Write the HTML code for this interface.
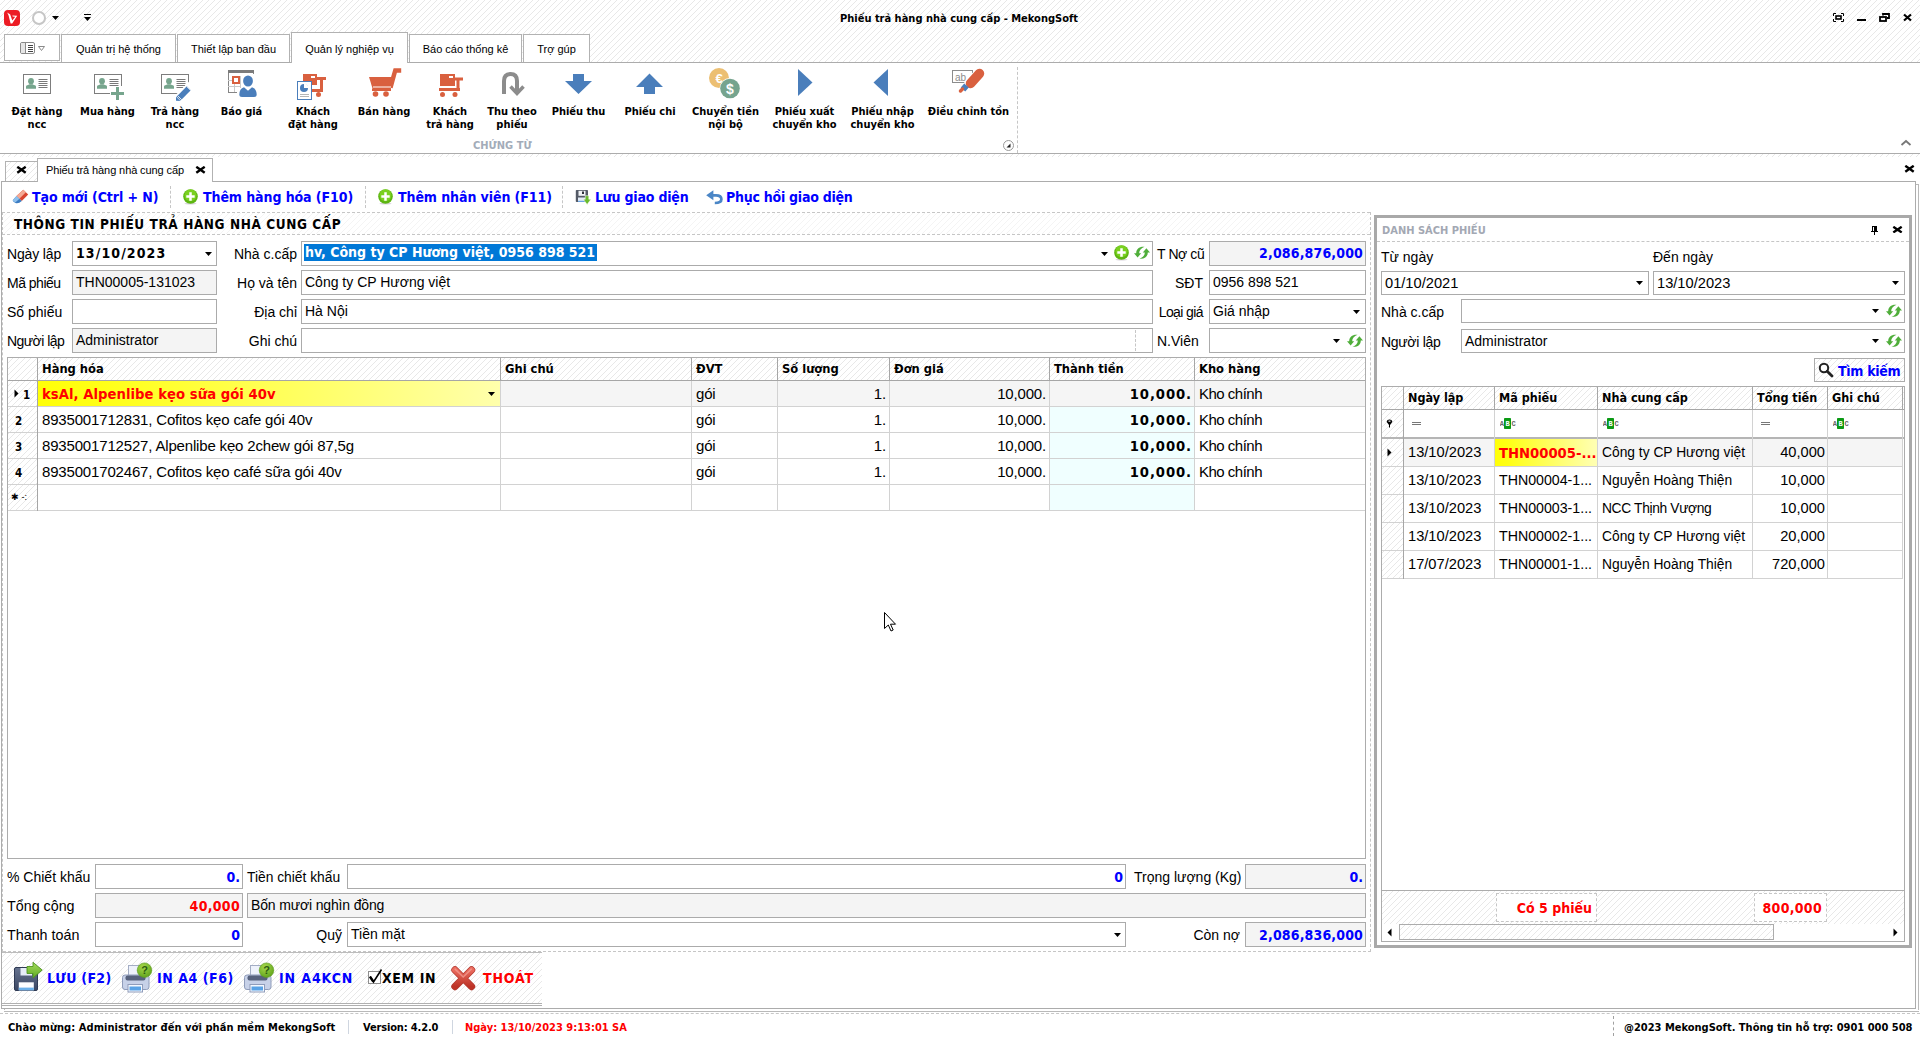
<!DOCTYPE html>
<html lang="vi">
<head>
<meta charset="utf-8">
<title>Phiếu trả hàng nhà cung cấp - MekongSoft</title>
<style>
*{box-sizing:border-box;margin:0;padding:0}
html,body{width:1920px;height:1038px;overflow:hidden;background:#fff}
body{position:relative;font-family:"Liberation Sans",sans-serif;font-size:14px;color:#000;cursor:default}
.a{position:absolute}
.hatch{background-color:#fff;background-image:repeating-linear-gradient(135deg,rgba(0,0,0,0) 0,rgba(0,0,0,0) 3.5355px,#e8e8e8 3.5355px,#e8e8e8 4.2426px)}
.b{font-family:"DejaVu Sans Condensed","DejaVu Sans","Liberation Sans",sans-serif;font-weight:bold}
.hl{position:absolute;height:1px;background:#acacac}
.vl{position:absolute;width:1px;background:#acacac}
.dh{position:absolute;height:0;border-top:1px dashed #c6c6c6}
.dv{position:absolute;width:0;border-left:1px dashed #c6c6c6}
.nw{white-space:nowrap}
/* ribbon tabs */
.rt{position:absolute;top:34px;height:29px;border:1px solid #b2b2b2;border-bottom:none;background:#fff;font-size:11px;line-height:29px;text-align:center;white-space:nowrap}
/* ribbon buttons */
  .rl{position:absolute;top:105px;width:100px;margin-left:-50px;text-align:center;font-size:11px;line-height:13px;white-space:nowrap}
/* form */
.lb{position:absolute;height:25px;line-height:27px;font-size:14px;white-space:nowrap}
.fd{position:absolute;height:25px;border:1px solid #ababab;background:#fff;font-size:14px;line-height:22px;padding:0 3px;white-space:nowrap;overflow:hidden}
.dis{background:#f4f4f4}
.r{text-align:right}
.fd.b.r{padding-right:2px;line-height:24px}
.blue{color:#0000ff}
.red{color:#ff0000}
.arr{position:absolute;width:7px;height:4px;background:#000;clip-path:polygon(0 0,100% 0,50% 100%)}
/* grid */
.gh{position:absolute;top:358px;height:22px;line-height:22px;font-size:12.800px;padding-left:4px;white-space:nowrap}
.gc{position:absolute;height:25px;line-height:26px;font-size:15px;letter-spacing:-.17px;white-space:nowrap;padding:0 4px;overflow:hidden}
.tb{position:absolute;top:186px;height:22px;line-height:22px;font-size:14px;letter-spacing:-.08px;color:#0000ff;white-space:nowrap}
.rc{position:absolute;height:27px;line-height:27px;font-size:14.67px;white-space:nowrap;padding:0 4px;overflow:hidden}
.rh{position:absolute;top:387px;height:22px;line-height:22px;font-size:12.5px;padding-left:4px;white-space:nowrap}
.hatch2{background-color:#fff;background-image:repeating-linear-gradient(135deg,rgba(0,0,0,0) 0,rgba(0,0,0,0) 3.5355px,#f4f4f4 3.5355px,#f4f4f4 4.2426px)}
</style>
</head>
<body>
<!-- TITLEBAR -->
<div class="a hatch" style="left:0;top:0;width:1920px;height:62px"></div>
<!-- app icon -->
<svg class="a" style="left:4px;top:10px" width="16" height="16" viewBox="0 0 16 16"><rect x="0" y="0" width="16" height="16" rx="4" fill="#ec1c24"/><path d="M3.2 2.6 L6.2 4.6 L8.3 10.6 L11.2 6.8 L8.6 6.6 L8.4 5.4 L13.2 5.8 L8.2 13.4 L6.6 13.4 L4.6 5.6 Z" fill="#fff"/></svg>
<div class="a" style="left:32px;top:11px;width:14px;height:14px;border:2px solid #c6c6c6;border-radius:50%;background:#fff"></div>
<div class="arr" style="left:52px;top:16px"></div>
<div class="a" style="left:84px;top:14px;width:7px;height:1px;background:#000"></div>
<div class="arr" style="left:84px;top:17px"></div>
<div class="a b nw" style="left:760px;top:11px;width:398px;height:15px;line-height:15px;font-size:11px;text-align:center">Phiếu trả hàng nhà cung cấp - MekongSoft</div>
<!-- window buttons -->
<svg class="a" style="left:1832px;top:12px" width="82" height="12" viewBox="0 0 82 12" fill="none" stroke="#000">
<path d="M1.5 4 V1.5 H4 M9 1.5 H11.5 V4 M11.5 7 V9.5 H9 M4 9.5 H1.5 V7" stroke-width="1"/><rect x="4" y="4" width="5" height="3" stroke-width="1.6"/>
<path d="M25 8 H34" stroke-width="2"/>
<path d="M51 3.5 V2 H57 V6 H55" stroke-width="1.8"/><rect x="48" y="5" width="6" height="4" stroke-width="1.8"/>
<path d="M72 2.5 L79 8.5 M79 2.5 L72 8.5" stroke-width="2.2"/>
</svg>

<div class="a" style="left:4px;top:34px;width:56px;height:27px;border:1px solid #b2b2b2;background:#fff"></div>
<svg class="a" style="left:19px;top:41px" width="28" height="15" viewBox="0 0 28 15" fill="none"><rect x="1.5" y="1.5" width="14" height="11" rx="1.5" stroke="#8a8a8a" fill="#fff"/><rect x="2" y="2" width="4" height="10" fill="#e6e6e6"/><path d="M6.5 1.5 V12.5" stroke="#8a8a8a"/><path d="M9 4.5 H14 M9 6.5 H14 M9 8.5 H14 M9 10.5 H14" stroke="#444" stroke-width="1"/><path d="M19.5 5.5 H25.5 L22.5 9.5 Z" stroke="#8a8a8a" fill="#fff"/></svg>
<div class="rt" style="left:61px;width:115px">Quản trị hệ thống</div>
<div class="rt" style="left:177px;width:113px">Thiết lập ban đầu</div>
<div class="rt" style="left:409px;width:113px">Báo cáo thống kê</div>
<div class="rt" style="left:523px;width:67px">Trợ gúp</div>
<div class="hl" style="left:0;top:62px;width:1920px"></div>
<div class="a" style="left:0;top:63px;width:1920px;height:90px;background:#fff"></div>
<div class="rt" style="left:291px;top:32px;width:117px;height:31px;line-height:33px">Quản lý nghiệp vụ</div>
<div class="hl" style="left:0;top:153px;width:1920px"></div>
<div class="a hatch" style="left:0;top:154px;width:1920px;height:3px"></div>

<!-- ribbon icons -->
<svg class="a" style="left:0;top:64px" width="1020" height="40" viewBox="0 64 1020 40">
<!-- 1 id card -->
<g><rect x="23.5" y="74.500" width="27" height="19" fill="#fff" stroke="#7d7d7d"/><ellipse cx="31.0" cy="81.200" rx="2.900" ry="3.100" fill="#76a58d"/><path d="M26.0 88.800 V86.600 Q26.0 85.300 28.0 85 L29.5 84.300 H32.5 L34.0 85 Q36.0 85.300 36.0 86.600 V88.800 Z" fill="#76a58d"/><path d="M38.5 79.5 H47.5 M38.5 81.5 H47.5 M38.5 83.5 H47.5 M38.5 85.5 H47.5 M38.5 87.5 H47.5" stroke="#787878" stroke-width="1"/></g>
<!-- 2 id card plus -->
<g><rect x="94.5" y="74.500" width="27" height="19" fill="#fff" stroke="#7d7d7d"/><ellipse cx="102.0" cy="81.200" rx="2.900" ry="3.100" fill="#76a58d"/><path d="M97.0 88.800 V86.600 Q97.0 85.300 99.0 85 L100.5 84.300 H103.5 L105.0 85 Q107.0 85.300 107.0 86.600 V88.800 Z" fill="#76a58d"/><path d="M109.5 79.5 H118.5 M109.5 81.5 H118.5 M109.5 83.5 H118.5 M109.5 85.5 H118.5" stroke="#787878" stroke-width="1"/><rect x="110" y="86" width="15" height="15" fill="#fff"/><path d="M117.500 87 V100 M111 93.500 H124" stroke="#76a58d" stroke-width="3"/></g>
<!-- 3 id card pencil -->
<g><rect x="161.5" y="74.500" width="27" height="19" fill="#fff" stroke="#7d7d7d"/><ellipse cx="169.0" cy="81.200" rx="2.900" ry="3.100" fill="#76a58d"/><path d="M164.0 88.800 V86.600 Q164.0 85.300 166.0 85 L167.5 84.300 H170.5 L172.0 85 Q174.0 85.300 174.0 86.600 V88.800 Z" fill="#76a58d"/><path d="M176.5 79.5 H185.5 M176.5 81.5 H185.5 M176.5 83.5 H185.5 M176.5 85.5 H185.5 M176.5 87.5 H183.5" stroke="#787878" stroke-width="1"/><path d="M174 103 L192 85" stroke="#fff" stroke-width="9"/><path d="M178.700 98.400 L188.800 88.300" stroke="#4a7ebb" stroke-width="5.600"/><path d="M176 100.800 V96.600 L180.400 101 Z" fill="#4a7ebb"/><path d="M187 86.800 L190.800 90.600" stroke="#fff" stroke-width=".8"/><path d="M178 96 L181.800 99.800" stroke="#fff" stroke-width=".8"/></g>
<!-- 4 calendar person -->
<g><rect x="228.500" y="71.500" width="25" height="21" fill="#fff" stroke="#858585"/><rect x="228" y="70" width="26" height="3" fill="#7b7b7b"/><path d="M234.500 76 V92 M240.500 76 V92 M228 80.500 H254 M228 86.500 H254" stroke="#c9c9c9"/><rect x="233" y="77" width="6" height="6" fill="#fff" stroke="#d9603f" stroke-width="2"/><path d="M241 74 H259 V98 H237 V88 H241 Z" fill="#fff"/><ellipse cx="248" cy="81" rx="4.900" ry="5.600" fill="#4a7ebb"/><path d="M239.300 95 Q239.300 88.500 244 87.300 L248 90.800 L252 87.300 Q256.700 88.500 256.700 95 Q256.700 97 254 97 H242 Q239.300 97 239.300 95 Z" fill="#4a7ebb"/></g>
<!-- 5 chart doc + cart -->
<g><rect x="303" y="74" width="14" height="11" fill="#d9603f"/><rect x="311" y="76" width="4" height="2" fill="#fff"/><path d="M316 78.500 H326 M321.500 78 V90 M305 90.500 H323" stroke="#d9603f" stroke-width="3"/><circle cx="318.500" cy="94.500" r="2.500" fill="#d9603f"/><rect x="297.500" y="81.500" width="14" height="18" fill="#fff" stroke="#4a7ebb"/><circle cx="304" cy="88" r="4" fill="#4a7ebb"/><path d="M304 88 V83.500 A4.500 4.500 0 0 1 308.500 88 Z" fill="#fff"/><path d="M300 94.500 H309 M300 96.500 H309" stroke="#b5b5b5"/></g>
<!-- 6 cart -->
<g fill="#d9603f"><path d="M369 77 H394 L390.500 90 H373 Z"/><path d="M392 78 L394.500 69.500 H400 V71.500 H396 L391.500 88" fill="none" stroke="#d9603f" stroke-width="2.400"/><path d="M373 87 H391" stroke="#fff" stroke-width="1"/><rect x="372" y="88.500" width="19" height="2.500"/><circle cx="375.500" cy="94" r="2.800"/><circle cx="386" cy="94" r="2.800"/></g>
<!-- 7 box cart -->
<g fill="#d9603f"><rect x="440" y="74" width="15" height="12"/><rect x="449" y="76" width="4" height="2" fill="#fff"/><path d="M454 79 H463 M458 78 V90 M439 89.500 H460" stroke="#d9603f" stroke-width="3" fill="none"/><circle cx="442.500" cy="94.500" r="2.500"/><circle cx="455" cy="94.500" r="2.500"/></g>
<!-- 8 u-turn -->
<g fill="none" stroke="#8c8c8c" stroke-width="4"><path d="M504 94 V81 Q504 74 510.500 74 Q517 74 517 81 V92"/><path d="M510.500 86.500 L517 93.500 L523.500 86.500" stroke-width="3.500"/></g>
<!-- 9 down arrow -->
<path d="M573 74 H584 V81 H592 L578.500 94 L565 81 H573 Z" fill="#4a7ebb"/>
<!-- 10 up arrow -->
<path d="M649.500 73.500 L663 87 H655 V94 H644 V87 H636 Z" fill="#4a7ebb"/>
<!-- 11 coins -->
<circle cx="719" cy="78" r="10" fill="#ecbf72"/><text x="719" y="83" font-family="Liberation Sans,sans-serif" font-weight="bold" font-size="13" fill="#fff" text-anchor="middle">€</text>
<circle cx="730" cy="88.500" r="10.500" fill="#fff"/><circle cx="730" cy="88.500" r="9.800" fill="#76a48e"/><text x="730" y="93.500" font-family="Liberation Sans,sans-serif" font-weight="bold" font-size="14" fill="#fff" text-anchor="middle">$</text>
<!-- 12 right tri -->
<path d="M798 69 L812.500 82.500 L798 96 Z" fill="#4a7ebb"/>
<!-- 13 left tri -->
<path d="M888 69 L873.500 82.500 L888 96 Z" fill="#4a7ebb"/>
<!-- 14 highlighter -->
<g><rect x="952.500" y="70.500" width="20" height="12" fill="#fff" stroke="#8c8c8c"/><text x="955" y="81" font-family="Liberation Sans,sans-serif" font-size="10" fill="#8c8c8c">ab</text><path d="M965 90 L977 76" stroke="#fff" stroke-width="11"/><path d="M970.500 83.500 L979.500 73.500" stroke="#d9603f" stroke-width="9.500" stroke-linecap="round"/><path d="M963 89.500 L966.500 85.500" stroke="#4a7ebb" stroke-width="6"/><path d="M960.500 91 L962.500 89" stroke="#d9603f" stroke-width="3.500" stroke-linecap="round"/></g>
</svg>
<!-- labels -->
<div class="rl b" style="left:37px">Đặt hàng<br>ncc</div>
<div class="rl b" style="left:107.500px">Mua hàng</div>
<div class="rl b" style="left:175px">Trả hàng<br>ncc</div>
<div class="rl b" style="left:241.500px">Báo giá</div>
<div class="rl b" style="left:313px">Khách<br>đặt hàng</div>
<div class="rl b" style="left:384px">Bán hàng</div>
<div class="rl b" style="left:450px">Khách<br>trả hàng</div>
<div class="rl b" style="left:512px">Thu theo<br>phiếu</div>
<div class="rl b" style="left:578.500px">Phiếu thu</div>
<div class="rl b" style="left:650px">Phiếu chi</div>
<div class="rl b" style="left:725.500px">Chuyển tiền<br>nội bộ</div>
<div class="rl b" style="left:804.500px">Phiếu xuất<br>chuyển kho</div>
<div class="rl b" style="left:882.500px">Phiếu nhập<br>chuyển kho</div>
<div class="rl b" style="left:968.500px">Điều chỉnh tồn</div>
<div class="a b nw" style="left:473px;top:139px;height:14px;line-height:14px;font-size:11px;color:#a3acb9">CHỨNG TỪ</div>
<div class="dv" style="left:1017px;top:67px;height:86px"></div>
<svg class="a" style="left:1002px;top:139px" width="13" height="13" viewBox="0 0 13 13"><circle cx="6.500" cy="6.500" r="5" fill="#fff" stroke="#9a9a9a"/><path d="M8.500 4.500 V8.500 H4.500 Z" fill="#222"/></svg>
<svg class="a" style="left:1900px;top:139px" width="12" height="8" viewBox="0 0 12 8"><path d="M1.500 6 L6 2 L10.500 6" fill="none" stroke="#777" stroke-width="1.800"/></svg>

<!-- document tabs -->
<div class="a hatch" style="left:5px;top:161px;width:33px;height:21px;border:1px solid #b2b2b2;border-bottom:none"></div>
<svg class="a" style="left:16px;top:166px" width="11" height="8" viewBox="0 0 11 8"><path d="M1.300 0.800 L9.700 6.800 M9.700 0.800 L1.300 6.800" stroke="#000" stroke-width="2.400"/></svg>
<!-- frames -->
<div class="a" style="left:4px;top:184px;width:1915px;height:828px;border:1px solid #b9b9b9;background:#fff"></div>
<div class="a" style="left:1px;top:181px;width:1915px;height:828px;border:1px solid #acacac;background:#fff"></div>
<div class="a" style="left:37px;top:158px;width:176px;height:24px;border:1px solid #b2b2b2;border-bottom:none;background:#fff"></div>
<div class="a nw" style="left:46px;top:161px;height:18px;line-height:18px;font-size:11px;letter-spacing:-.1px">Phiếu trả hàng nhà cung cấp</div>
<svg class="a" style="left:195px;top:166px" width="11" height="8" viewBox="0 0 11 8"><path d="M1.300 0.800 L9.700 6.800 M9.700 0.800 L1.300 6.800" stroke="#000" stroke-width="2.400"/></svg>
<svg class="a" style="left:1904px;top:165px" width="11" height="8" viewBox="0 0 11 8"><path d="M1.300 0.800 L9.700 6.800 M9.700 0.800 L1.300 6.800" stroke="#000" stroke-width="2.400"/></svg>

<!-- toolbar -->
<svg class="a" style="left:12px;top:189px" width="17" height="15" viewBox="0 0 17 15"><path d="M11.250 0.700 L16.200 5.500 L9.800 12 L4.500 7 Z" fill="#d8452f"/><path d="M4.500 7 L9.800 12 Q6.500 15 3.500 14 Q1 13 0.700 11.300 Z" fill="#3b7cc2"/><path d="M11.250 0.700 L13.900 3.300 L7.400 9.700 L4.500 7 Z" fill="#f4aa94"/><path d="M4.500 7 L7.400 9.700 L3.600 13.300 Q1.200 12.800 0.700 11.300 Z" fill="#8fc0ec"/></svg>
<div class="tb b" style="left:32px">Tạo mới (Ctrl + N)</div>
<div class="dv" style="left:170px;top:186px;height:22px"></div>
<svg class="a" style="left:183px;top:189px" width="15" height="16" viewBox="0 0 15 16"><ellipse cx="7.500" cy="14.600" rx="6" ry="1" fill="#d9d3de"/><circle cx="7.500" cy="7.500" r="7.300" fill="#5db512"/><circle cx="7.500" cy="6.300" r="6" fill="#84d926" opacity=".75"/><path d="M7.500 3.300 V11.700 M3.300 7.500 H11.700" stroke="#fff" stroke-width="2.500"/></svg>
<div class="tb b" style="left:203px">Thêm hàng hóa (F10)</div>
<div class="dv" style="left:365px;top:186px;height:22px"></div>
<svg class="a" style="left:378px;top:189px" width="15" height="16" viewBox="0 0 15 16"><ellipse cx="7.500" cy="14.600" rx="6" ry="1" fill="#d9d3de"/><circle cx="7.500" cy="7.500" r="7.300" fill="#5db512"/><circle cx="7.500" cy="6.300" r="6" fill="#84d926" opacity=".75"/><path d="M7.500 3.300 V11.700 M3.300 7.500 H11.700" stroke="#fff" stroke-width="2.500"/></svg>
<div class="tb b" style="left:398px">Thêm nhân viên (F11)</div>
<div class="dv" style="left:562px;top:186px;height:22px"></div>
<svg class="a" style="left:575px;top:190px" width="17" height="15" viewBox="0 0 17 15"><rect x="0.800" y="0" width="12.200" height="12" rx=".8" fill="#545a66"/><rect x="3.500" y="0.800" width="7" height="5" fill="#f1f3f7"/><rect x="7" y="1.500" width="2" height="2.500" fill="#2d3038"/><rect x="3" y="7.500" width="7.500" height="4.500" fill="#e3ebf6"/><rect x="3" y="10.800" width="7.500" height="1.200" fill="#6aa3e0"/><path d="M10.300 5.700 H13.800 V9.300 H16 L12.100 14.400 L8.300 9.300 H10.300 Z" fill="#69bb2c" stroke="#fff" stroke-width=".5"/></svg>
<div class="tb b" style="left:595px;letter-spacing:-.2px">Lưu giao diện</div>
<svg class="a" style="left:706px;top:190px" width="17" height="15" viewBox="0 0 17 15"><path d="M6 5.300 H10 C14.200 5.300 15.400 7.400 15.400 9.200 C15.400 12 13 13 8.800 13" fill="none" stroke="#4b86c6" stroke-width="2.700"/><path d="M0.200 5.300 L7.400 0.300 V10.300 Z" fill="#4b86c6"/></svg>
<div class="tb b" style="left:726px;letter-spacing:-.25px">Phục hồi giao diện</div>
<!-- section header -->
<div class="a hatch2" style="left:2px;top:213px;width:1368px;height:21px"></div>
<div class="dh" style="left:2px;top:212px;width:1368px"></div>
<div class="dh" style="left:2px;top:234px;width:1368px"></div>
<div class="dv" style="left:1370px;top:212px;height:740px"></div>
<div class="dv" style="left:2px;top:212px;height:740px"></div>
<div class="a b nw" style="left:14px;top:214px;height:20px;line-height:20px;font-size:13.500px;letter-spacing:.58px">THÔNG TIN PHIẾU TRẢ HÀNG NHÀ CUNG CẤP</div>

<!-- form left -->
<div class="lb" style="left:7px;top:241px;letter-spacing:-.15px">Ngày lập</div>
<div class="fd b" style="left:72px;top:241px;width:145px;font-size:14px;letter-spacing:1.100px">13/10/2023</div><div class="arr" style="left:205px;top:252px"></div>
<div class="lb" style="left:7px;top:270px;letter-spacing:-.5px">Mã phiếu</div>
<div class="fd dis" style="left:72px;top:270px;width:145px">THN00005-131023</div>
<div class="lb" style="left:7px;top:299px">Số phiếu</div>
<div class="fd" style="left:72px;top:299px;width:145px"></div>
<div class="lb" style="left:7px;top:328px;letter-spacing:-.55px">Người lập</div>
<div class="fd dis" style="left:72px;top:328px;width:145px">Administrator</div>
<!-- form middle -->
<div class="lb r" style="left:227px;width:70px;top:241px">Nhà c.cấp</div>
<div class="fd" style="left:301px;top:241px;width:852px"></div>
<div class="a" style="left:304px;top:244px;width:293px;height:17px;background:#0078d7"></div>
<div class="a b nw" style="left:305px;top:243px;height:19px;line-height:19px;font-size:14px;color:#fff">hv, Công ty CP Hương việt, 0956 898 521</div>
<div class="arr" style="left:1101px;top:252px"></div>
<svg class="a" style="left:1114px;top:245px" width="15" height="16" viewBox="0 0 15 16"><ellipse cx="7.500" cy="14.600" rx="6" ry="1" fill="#d9d3de"/><circle cx="7.500" cy="7.500" r="7.300" fill="#5db512"/><circle cx="7.500" cy="6.300" r="6" fill="#84d926" opacity=".75"/><path d="M7.500 3.300 V11.700 M3.300 7.500 H11.700" stroke="#fff" stroke-width="2.500"/></svg>
<svg class="a" style="left:1134px;top:246px" width="16" height="14" viewBox="0 0 16 14" fill="#4fae3a"><path d="M10.500 0.800 C5.500 0.300 2.200 3 2.200 7.200 H0 L3.600 11.400 L7.200 7.200 H5.200 C5.200 4.500 7 2.300 10.500 0.800 Z"/><path d="M5.500 12.800 C10.500 13.300 13.800 10.600 13.800 6.400 H16 L12.400 2.200 L8.800 6.400 H10.800 C10.800 9.100 9 11.300 5.500 12.800 Z"/></svg>
<div class="lb r" style="left:227px;width:70px;top:270px">Họ và tên</div>
<div class="fd" style="left:301px;top:270px;width:852px">Công ty CP Hương việt</div>
<div class="lb r" style="left:227px;width:70px;top:299px">Địa chỉ</div>
<div class="fd" style="left:301px;top:299px;width:852px">Hà Nội</div>
<div class="lb r" style="left:227px;width:70px;top:328px">Ghi chú</div>
<div class="fd" style="left:301px;top:328px;width:852px"></div>
<div class="dv" style="left:1135px;top:330px;height:21px"></div>
<!-- form right -->
<div class="lb" style="left:1157px;top:241px;letter-spacing:-.4px">T Nợ cũ</div>
<div class="fd dis b r blue" style="left:1209px;top:241px;width:157px;letter-spacing:.15px;line-height:22px">2,086,876,000</div>
<div class="lb r" style="left:1150px;width:53px;top:270px">SĐT</div>
<div class="fd" style="left:1209px;top:270px;width:157px">0956 898 521</div>
<div class="lb r" style="left:1150px;width:53px;top:299px;letter-spacing:-.6px">Loại giá</div>
<div class="fd" style="left:1209px;top:299px;width:157px">Giá nhập</div><div class="arr" style="left:1353px;top:310px"></div>
<div class="lb" style="left:1157px;top:328px">N.Viên</div>
<div class="fd" style="left:1209px;top:328px;width:157px"></div><div class="arr" style="left:1333px;top:339px"></div>
<svg class="a" style="left:1347px;top:333.5px" width="16" height="14" viewBox="0 0 16 14" fill="#4fae3a"><path d="M10.500 0.800 C5.500 0.300 2.200 3 2.200 7.200 H0 L3.600 11.400 L7.200 7.200 H5.200 C5.200 4.500 7 2.300 10.500 0.800 Z"/><path d="M5.500 12.800 C10.500 13.300 13.800 10.600 13.800 6.400 H16 L12.400 2.200 L8.800 6.400 H10.800 C10.800 9.100 9 11.300 5.500 12.800 Z"/></svg>

<!-- main grid -->
<div class="a" style="left:7px;top:357px;width:1359px;height:502px;border:1px solid #acacac;background:#fff"></div>
<div class="a hatch" style="left:8px;top:358px;width:1357px;height:22px"></div>
<div class="a hatch" style="left:8px;top:381px;width:29px;height:129px"></div>
<div class="a" style="left:500px;top:381px;width:865px;height:25px;background:#f5f5f5"></div>
<div class="a" style="left:1050px;top:407px;width:144px;height:103px;background:#f0ffff"></div>
<div class="a" style="left:38px;top:381px;width:462px;height:25px;background:linear-gradient(90deg,#ffff08 0,#ffff14 12%,#ffffac 100%)"></div>
<div class="hl" style="left:8px;top:380px;width:1357px;background:#a6a6a6"></div>
<div class="hl" style="left:8px;top:406px;width:1357px;background:#d2d2d2"></div>
<div class="hl" style="left:8px;top:432px;width:1357px;background:#d2d2d2"></div>
<div class="hl" style="left:8px;top:458px;width:1357px;background:#d2d2d2"></div>
<div class="hl" style="left:8px;top:484px;width:1357px;background:#d2d2d2"></div>
<div class="hl" style="left:8px;top:510px;width:1357px;background:#d2d2d2"></div>
<div class="vl" style="left:37px;top:358px;height:23px;background:#a6a6a6"></div>
<div class="vl" style="left:37px;top:381px;height:130px;background:#d2d2d2"></div>
<div class="vl" style="left:500px;top:358px;height:23px;background:#a6a6a6"></div>
<div class="vl" style="left:500px;top:381px;height:130px;background:#d2d2d2"></div>
<div class="vl" style="left:691px;top:358px;height:23px;background:#a6a6a6"></div>
<div class="vl" style="left:691px;top:381px;height:130px;background:#d2d2d2"></div>
<div class="vl" style="left:777px;top:358px;height:23px;background:#a6a6a6"></div>
<div class="vl" style="left:777px;top:381px;height:130px;background:#d2d2d2"></div>
<div class="vl" style="left:889px;top:358px;height:23px;background:#a6a6a6"></div>
<div class="vl" style="left:889px;top:381px;height:130px;background:#d2d2d2"></div>
<div class="vl" style="left:1049px;top:358px;height:23px;background:#a6a6a6"></div>
<div class="vl" style="left:1049px;top:381px;height:130px;background:#d2d2d2"></div>
<div class="vl" style="left:1194px;top:358px;height:23px;background:#a6a6a6"></div>
<div class="vl" style="left:1194px;top:381px;height:130px;background:#d2d2d2"></div>
<div class="vl" style="left:37px;top:381px;height:130px;background:#a6a6a6"></div>
<div class="gh b" style="left:38px">Hàng hóa</div>
<div class="gh b" style="left:501px">Ghi chú</div>
<div class="gh b" style="left:692px">ĐVT</div>
<div class="gh b" style="left:778px">Số lượng</div>
<div class="gh b" style="left:890px">Đơn giá</div>
<div class="gh b" style="left:1050px">Thành tiền</div>
<div class="gh b" style="left:1195px">Kho hàng</div>
<div class="gc b" style="left:8px;top:381px;width:29px;font-size:11.500px;line-height:28px;padding:0 0 0 15px">1</div>
<div class="gc b red" style="left:38px;top:381px;width:440px;font-size:14.670px;letter-spacing:.05px">ksAl, Alpenlibe kẹo sữa gói 40v</div>
<div class="gc" style="left:692px;top:381px;width:85px">gói</div>
<div class="gc r" style="padding-right:3px;left:778px;top:381px;width:111px">1.</div>
<div class="gc r" style="padding-right:3px;left:890px;top:381px;width:159px">10,000.</div>
<div class="gc r b" style="left:1050px;top:381px;width:144px;font-size:14.670px;letter-spacing:.9px;padding-right:2px">10,000.</div>
<div class="gc" style="left:1195px;top:381px;width:170px;letter-spacing:-.5px">Kho chính</div>
<div class="gc b" style="left:8px;top:407px;width:29px;font-size:11.500px;line-height:28px;text-align:left;padding:0 0 0 7px">2</div>
<div class="gc" style="left:38px;top:407px;width:462px">8935001712831, Cofitos kẹo cafe gói 40v</div>
<div class="gc" style="left:692px;top:407px;width:85px">gói</div>
<div class="gc r" style="padding-right:3px;left:778px;top:407px;width:111px">1.</div>
<div class="gc r" style="padding-right:3px;left:890px;top:407px;width:159px">10,000.</div>
<div class="gc r b" style="left:1050px;top:407px;width:144px;font-size:14.670px;letter-spacing:.9px;padding-right:2px">10,000.</div>
<div class="gc" style="left:1195px;top:407px;width:170px;letter-spacing:-.5px">Kho chính</div>
<div class="gc b" style="left:8px;top:433px;width:29px;font-size:11.500px;line-height:28px;text-align:left;padding:0 0 0 7px">3</div>
<div class="gc" style="left:38px;top:433px;width:462px">8935001712527, Alpenlibe kẹo 2chew gói 87,5g</div>
<div class="gc" style="left:692px;top:433px;width:85px">gói</div>
<div class="gc r" style="padding-right:3px;left:778px;top:433px;width:111px">1.</div>
<div class="gc r" style="padding-right:3px;left:890px;top:433px;width:159px">10,000.</div>
<div class="gc r b" style="left:1050px;top:433px;width:144px;font-size:14.670px;letter-spacing:.9px;padding-right:2px">10,000.</div>
<div class="gc" style="left:1195px;top:433px;width:170px;letter-spacing:-.5px">Kho chính</div>
<div class="gc b" style="left:8px;top:459px;width:29px;font-size:11.500px;line-height:28px;text-align:left;padding:0 0 0 7px">4</div>
<div class="gc" style="left:38px;top:459px;width:462px">8935001702467, Cofitos kẹo café sữa gói 40v</div>
<div class="gc" style="left:692px;top:459px;width:85px">gói</div>
<div class="gc r" style="padding-right:3px;left:778px;top:459px;width:111px">1.</div>
<div class="gc r" style="padding-right:3px;left:890px;top:459px;width:159px">10,000.</div>
<div class="gc r b" style="left:1050px;top:459px;width:144px;font-size:14.670px;letter-spacing:.9px;padding-right:2px">10,000.</div>
<div class="gc" style="left:1195px;top:459px;width:170px;letter-spacing:-.5px">Kho chính</div>
<svg class="a" style="left:14px;top:389px" width="5" height="9" viewBox="0 0 5 9"><path d="M0.500 0.500 L4.500 4.500 L0.500 8.500 Z" fill="#000"/></svg>
<div class="arr" style="left:488px;top:392px"></div>
<div class="a nw" style="left:11px;top:489px;height:17px;line-height:17px;font-size:9px">✱ -:</div>

<!-- bottom totals -->
<div class="lb" style="left:7px;top:864px;font-size:14px">% Chiết khấu</div>
<div class="fd b r blue" style="left:95px;top:864px;width:148px">0.</div>
<div class="lb" style="left:247px;top:864px;font-size:13.800px">Tiền chiết khấu</div>
<div class="fd b r blue" style="left:347px;top:864px;width:779px">0</div>
<div class="lb" style="left:1134px;top:864px;font-size:14px">Trọng lượng (Kg)</div>
<div class="fd dis b r blue" style="left:1245px;top:864px;width:121px">0.</div>
<div class="lb" style="left:7px;top:893px;font-size:14.300px">Tổng cộng</div>
<div class="fd dis b r red" style="left:95px;top:893px;width:148px;letter-spacing:.3px">40,000</div>
<div class="fd dis" style="left:247px;top:893px;width:1119px;letter-spacing:-.15px">Bốn mươi nghìn đồng</div>
<div class="lb" style="left:7px;top:922px;font-size:14.300px">Thanh toán</div>
<div class="fd b r blue" style="left:95px;top:922px;width:148px">0</div>
<div class="lb r" style="left:290px;width:52px;top:922px">Quỹ</div>
<div class="fd" style="left:347px;top:922px;width:779px">Tiền mặt</div><div class="arr" style="left:1114px;top:933px"></div>
<div class="lb r" style="left:1180px;width:60px;top:922px">Còn nợ</div>
<div class="fd dis b r blue" style="left:1245px;top:922px;width:121px;letter-spacing:.15px">2,086,836,000</div>
<div class="dh" style="left:3px;top:951px;width:1368px"></div>

<!-- button bar -->
<div class="a hatch" style="left:2px;top:952px;width:540px;height:51px"></div>
<div class="hl" style="left:2px;top:952px;width:540px;background:#bdbdbd"></div>
<div class="hl" style="left:2px;top:1003px;width:540px;background:#b0b0b0"></div>
<div class="hl" style="left:2px;top:1005px;width:540px;background:#b0b0b0"></div>
<!-- save icon -->
<svg class="a" style="left:13px;top:961px" width="31" height="32" viewBox="0 0 31 32"><defs><linearGradient id="gsv" x1="0" y1="0" x2="0" y2="1"><stop offset="0" stop-color="#66738f"/><stop offset="1" stop-color="#3b4763"/></linearGradient><linearGradient id="gar" x1="0" y1="0" x2="0" y2="1"><stop offset="0" stop-color="#a4dc5c"/><stop offset="1" stop-color="#5faa22"/></linearGradient></defs><rect x="1.500" y="6.500" width="23" height="23" rx="1.500" fill="url(#gsv)" stroke="#2f3a54"/><rect x="7.500" y="7" width="11.500" height="7.500" fill="#e6edf8"/><rect x="5.800" y="21.300" width="15" height="8" fill="#fdfdff"/><rect x="5.800" y="26.600" width="15" height="2.700" fill="#6cb0ea"/><path d="M14 5.500 H20 V1.300 L29.200 9 L20 17 V12.500 H14 Z" fill="url(#gar)" stroke="#4f9420" stroke-width=".9" stroke-linejoin="round"/></svg>
<div class="a b nw blue" style="left:47px;top:967px;height:22px;line-height:22px;font-size:14px;letter-spacing:.3px">LƯU (F2)</div>
<!-- printer 1 -->
<svg class="a" style="left:121px;top:962px" width="32" height="31" viewBox="0 0 32 31"><defs><radialGradient id="gq" cx=".4" cy=".3" r=".8"><stop offset="0" stop-color="#a6d94c"/><stop offset="1" stop-color="#5a9e17"/></radialGradient></defs><rect x="7.500" y="3.500" width="13" height="11.500" fill="#eef2fb" stroke="#a3adc4"/><rect x="1.500" y="13" width="26.500" height="14.500" rx="2.500" fill="#c7d1e8" stroke="#8f9cba"/><rect x="4.500" y="13.500" width="20" height="5" rx="2" fill="#57627d"/><rect x="7" y="22.500" width="14.500" height="7.500" fill="#f4f8ff" stroke="#8f9cba"/><rect x="8.500" y="24.500" width="11.500" height="4" fill="#5ba3e6"/><circle cx="23.500" cy="8.200" r="7.300" fill="url(#gq)" stroke="#5d9a1f" stroke-width=".6"/><text x="23.500" y="12.200" font-family="Liberation Sans,sans-serif" font-weight="bold" font-size="11" fill="#2a5a10" text-anchor="middle">?</text></svg>
<div class="a b nw blue" style="left:157px;top:967px;height:22px;line-height:22px;font-size:14px;letter-spacing:.55px">IN A4 (F6)</div>
<!-- printer 2 -->
<svg class="a" style="left:243px;top:962px" width="32" height="31" viewBox="0 0 32 31"><rect x="7.500" y="3.500" width="13" height="11.500" fill="#eef2fb" stroke="#a3adc4"/><rect x="1.500" y="13" width="26.500" height="14.500" rx="2.500" fill="#c7d1e8" stroke="#8f9cba"/><rect x="4.500" y="13.500" width="20" height="5" rx="2" fill="#57627d"/><rect x="7" y="22.500" width="14.500" height="7.500" fill="#f4f8ff" stroke="#8f9cba"/><rect x="8.500" y="24.500" width="11.500" height="4" fill="#5ba3e6"/><circle cx="23.500" cy="8.200" r="7.300" fill="url(#gq)" stroke="#5d9a1f" stroke-width=".6"/><text x="23.500" y="12.200" font-family="Liberation Sans,sans-serif" font-weight="bold" font-size="11" fill="#2a5a10" text-anchor="middle">?</text></svg>
<div class="a b nw blue" style="left:279px;top:967px;height:22px;line-height:22px;font-size:14px;letter-spacing:.9px">IN A4KCN</div>
<!-- checkbox -->
<div class="a" style="left:368px;top:971px;width:13px;height:13px;border:1px solid #8f8f8f;background:#fff"></div>
<svg class="a" style="left:368px;top:968px" width="16" height="16" viewBox="0 0 16 16"><path d="M2 8.500 L5.500 14 L13.500 1.500" fill="none" stroke="#000" stroke-width="1.600"/><path d="M2 8.800 L5.300 13.500" fill="none" stroke="#000" stroke-width="2.400"/></svg>
<div class="a b nw" style="left:382px;top:967px;height:22px;line-height:22px;font-size:14px;letter-spacing:.6px">XEM IN</div>
<!-- exit -->
<svg class="a" style="left:450px;top:964px" width="27" height="28" viewBox="0 0 27 28"><defs><linearGradient id="gx" x1="0" y1="0" x2="0" y2="1"><stop offset="0" stop-color="#ea6b5e"/><stop offset="1" stop-color="#bd3327"/></linearGradient></defs><path d="M5 6 L21.500 22.500 M21.500 6 L5 22.500" stroke="#b23a30" stroke-width="7.400" stroke-linecap="round"/><path d="M5 6 L21.500 22.500 M21.500 6 L5 22.500" stroke="url(#gx)" stroke-width="6" stroke-linecap="round"/><path d="M5.200 5.200 L13.200 13 L21.300 5.200" fill="none" stroke="#f29a90" stroke-width="1.600" stroke-linecap="round" opacity=".8"/></svg>
<div class="a b nw red" style="left:483px;top:967px;height:22px;line-height:22px;font-size:14px;letter-spacing:.85px">THOÁT</div>

<!-- status bar -->
<div class="a" style="left:0;top:1010px;width:1920px;height:28px;background:#fff"></div>
<div class="hl" style="left:4px;top:1011px;width:1915px;background:#b9b9b9"></div>
<div class="hl" style="left:1px;top:1008px;width:1915px;background:#acacac"></div>
<div class="dh" style="left:0;top:1013px;width:1920px"></div>
<div class="a b nw" style="left:8px;top:1020px;height:16px;line-height:16px;font-size:11px;letter-spacing:.06px">Chào mừng: Administrator đến với phần mềm MekongSoft</div>
<div class="vl" style="left:348px;top:1020px;height:14px;background:#cfd6e0"></div>
<div class="a b nw" style="left:363px;top:1020px;height:16px;line-height:16px;font-size:11px;letter-spacing:-.15px">Version: 4.2.0</div>
<div class="vl" style="left:452px;top:1020px;height:14px;background:#cfd6e0"></div>
<div class="a b nw red" style="left:465px;top:1020px;height:16px;line-height:16px;font-size:11px">Ngày: 13/10/2023 9:13:01 SA</div>
<div class="dv" style="left:1613px;top:1016px;height:20px;border-color:#a0a0a0"></div>
<div class="a b nw" style="left:1624px;top:1020px;height:16px;line-height:16px;font-size:11px">@2023 MekongSoft. Thông tin hỗ trợ: 0901 000 508</div>

<!-- right panel -->
<div class="a" style="left:1374px;top:215px;width:538px;height:733px;border:3px solid #a9a9a9;background:#fff"></div>
<div class="a b nw" style="left:1382px;top:224px;height:14px;line-height:14px;font-size:11px;color:#a3a8b3">DANH SÁCH PHIẾU</div>
<svg class="a" style="left:1871px;top:226px" width="8" height="9" viewBox="0 0 8 9"><path d="M1 0 H6 V5 H7 V6 H4 V9 H3 V6 H0 V5 H1 Z M2 1 V5 H3 V1 Z" fill="#000" fill-rule="evenodd"/></svg>
<svg class="a" style="left:1892px;top:226px" width="11" height="7" viewBox="0 0 11 7"><path d="M1.300 0.800 L9.700 6.400 M9.700 0.800 L1.300 6.400" stroke="#000" stroke-width="2.400"/></svg>
<div class="dh" style="left:1377px;top:241px;width:532px"></div>
<div class="lb" style="left:1381px;top:245px;line-height:25px;font-size:14px">Từ ngày</div>
<div class="lb" style="left:1653px;top:245px;line-height:25px;font-size:14px">Đến ngày</div>
<div class="fd" style="left:1381px;top:271px;width:268px;height:24px;line-height:22px;font-size:14.670px">01/10/2021</div><div class="arr" style="left:1636px;top:281px"></div>
<div class="fd" style="left:1653px;top:271px;width:252px;height:24px;line-height:22px;font-size:14.670px">13/10/2023</div><div class="arr" style="left:1892px;top:281px"></div>
<div class="lb" style="left:1381px;top:299px;height:24px;line-height:27px;font-size:14px">Nhà c.cấp</div>
<div class="fd" style="left:1461px;top:299px;width:444px;height:24px"></div><div class="arr" style="left:1872px;top:309px"></div>
<div class="lb" style="left:1381px;top:329px;height:24px;line-height:27px;font-size:14px;letter-spacing:-.3px">Người lập</div>
<div class="fd" style="left:1461px;top:329px;width:444px;height:24px;line-height:22px;font-size:14px">Administrator</div><div class="arr" style="left:1872px;top:339px"></div>
<svg class="a" style="left:1886px;top:304px" width="16" height="14" viewBox="0 0 16 14" fill="#4fae3a"><path d="M10.500 0.800 C5.500 0.300 2.200 3 2.200 7.200 H0 L3.600 11.400 L7.200 7.200 H5.200 C5.200 4.500 7 2.300 10.500 0.800 Z"/><path d="M5.500 12.800 C10.500 13.300 13.800 10.600 13.800 6.400 H16 L12.400 2.200 L8.800 6.400 H10.800 C10.800 9.100 9 11.300 5.500 12.800 Z"/></svg>
<svg class="a" style="left:1886px;top:334px" width="16" height="14" viewBox="0 0 16 14" fill="#4fae3a"><path d="M10.500 0.800 C5.500 0.300 2.200 3 2.200 7.200 H0 L3.600 11.400 L7.200 7.200 H5.200 C5.200 4.500 7 2.300 10.500 0.800 Z"/><path d="M5.500 12.800 C10.500 13.300 13.800 10.600 13.800 6.400 H16 L12.400 2.200 L8.800 6.400 H10.800 C10.800 9.100 9 11.300 5.500 12.800 Z"/></svg>
<div class="a hatch" style="left:1814px;top:358px;width:91px;height:24px;border:1px solid #acacac"></div>
<svg class="a" style="left:1818px;top:362px" width="16" height="16" viewBox="0 0 16 16"><circle cx="6" cy="6" r="4.200" fill="#fff" stroke="#222" stroke-width="2"/><path d="M9.200 9.200 L14 14" stroke="#222" stroke-width="2.800" stroke-linecap="round"/></svg>
<div class="a b nw blue" style="left:1838px;top:359px;height:22px;line-height:25px;font-size:14px;letter-spacing:-.3px">Tìm kiếm</div>
<div class="a" style="left:1381px;top:386px;width:524px;height:556px;border:1px solid #acacac;background:#fff"></div>
<div class="a hatch" style="left:1382px;top:387px;width:522px;height:22px"></div>
<div class="a hatch" style="left:1382px;top:410px;width:21px;height:168px"></div>
<div class="a" style="left:1404px;top:439px;width:498px;height:27px;background:#f5f5f5"></div>
<div class="a" style="left:1495px;top:439px;width:102px;height:27px;background:linear-gradient(90deg,#ffff08 0,#ffff14 12%,#ffffb4 100%)"></div>
<div class="hl" style="left:1382px;top:409px;width:522px;background:#a6a6a6"></div>
<div class="a" style="left:1382px;top:437px;width:522px;height:2px;background:#b5b5b5"></div>
<div class="hl" style="left:1382px;top:466px;width:521px;background:#d2d2d2"></div>
<div class="hl" style="left:1382px;top:494px;width:521px;background:#d2d2d2"></div>
<div class="hl" style="left:1382px;top:522px;width:521px;background:#d2d2d2"></div>
<div class="hl" style="left:1382px;top:550px;width:521px;background:#d2d2d2"></div>
<div class="hl" style="left:1382px;top:578px;width:521px;background:#d2d2d2"></div>
<div class="vl" style="left:1403px;top:387px;height:23px;background:#a6a6a6"></div>
<div class="vl" style="left:1403px;top:410px;height:169px;background:#d2d2d2"></div>
<div class="vl" style="left:1494px;top:387px;height:23px;background:#a6a6a6"></div>
<div class="vl" style="left:1494px;top:410px;height:169px;background:#d2d2d2"></div>
<div class="vl" style="left:1597px;top:387px;height:23px;background:#a6a6a6"></div>
<div class="vl" style="left:1597px;top:410px;height:169px;background:#d2d2d2"></div>
<div class="vl" style="left:1752px;top:387px;height:23px;background:#a6a6a6"></div>
<div class="vl" style="left:1752px;top:410px;height:169px;background:#d2d2d2"></div>
<div class="vl" style="left:1827px;top:387px;height:23px;background:#a6a6a6"></div>
<div class="vl" style="left:1827px;top:410px;height:169px;background:#d2d2d2"></div>
<div class="vl" style="left:1902px;top:387px;height:23px;background:#a6a6a6"></div>
<div class="vl" style="left:1902px;top:410px;height:169px;background:#d2d2d2"></div>
<div class="vl" style="left:1403px;top:410px;height:169px;background:#a6a6a6"></div>
<div class="rh b" style="left:1404px">Ngày lập</div>
<div class="rh b" style="left:1495px">Mã phiếu</div>
<div class="rh b" style="left:1598px">Nhà cung cấp</div>
<div class="rh b" style="left:1753px">Tổng tiền</div>
<div class="rh b" style="left:1828px">Ghi chú</div>
<svg class="a" style="left:1386px;top:419px" width="7" height="9" viewBox="0 0 7 9"><ellipse cx="3.500" cy="2.500" rx="2.700" ry="1.900" fill="#000"/><ellipse cx="3.500" cy="2.100" rx="1.300" ry=".6" fill="#fff"/><path d="M1.200 3.500 H5.800 L4 6 V8.500 H3 V6 Z" fill="#000"/></svg>
<svg class="a" style="left:1412px;top:421px" width="10" height="5" viewBox="0 0 10 5"><path d="M0 1.500 H9 M0 3.500 H9" stroke="#777" stroke-width="1"/></svg>
<svg class="a" style="left:1500px;top:418px" width="16" height="11" viewBox="0 0 16 11"><rect x="4" y="0" width="7" height="11" rx=".8" fill="#0a9a14"/><text x="-.3" y="8" font-family="Liberation Mono,monospace" font-weight="bold" font-size="7" fill="#666">A</text><text x="5.400" y="8" font-family="Liberation Mono,monospace" font-weight="bold" font-size="7" fill="#fff">B</text><text x="11.600" y="8" font-family="Liberation Mono,monospace" font-weight="bold" font-size="7" fill="#666">C</text></svg>
<svg class="a" style="left:1603px;top:418px" width="16" height="11" viewBox="0 0 16 11"><rect x="4" y="0" width="7" height="11" rx=".8" fill="#0a9a14"/><text x="-.3" y="8" font-family="Liberation Mono,monospace" font-weight="bold" font-size="7" fill="#666">A</text><text x="5.400" y="8" font-family="Liberation Mono,monospace" font-weight="bold" font-size="7" fill="#fff">B</text><text x="11.600" y="8" font-family="Liberation Mono,monospace" font-weight="bold" font-size="7" fill="#666">C</text></svg>
<svg class="a" style="left:1761px;top:421px" width="10" height="5" viewBox="0 0 10 5"><path d="M0 1.500 H9 M0 3.500 H9" stroke="#777" stroke-width="1"/></svg>
<svg class="a" style="left:1833px;top:418px" width="16" height="11" viewBox="0 0 16 11"><rect x="4" y="0" width="7" height="11" rx=".8" fill="#0a9a14"/><text x="-.3" y="8" font-family="Liberation Mono,monospace" font-weight="bold" font-size="7" fill="#666">A</text><text x="5.400" y="8" font-family="Liberation Mono,monospace" font-weight="bold" font-size="7" fill="#fff">B</text><text x="11.600" y="8" font-family="Liberation Mono,monospace" font-weight="bold" font-size="7" fill="#666">C</text></svg>
<div class="rc" style="left:1404px;top:439px;width:90px">13/10/2023</div>
<div class="rc b red" style="left:1495px;top:439px;width:102px;letter-spacing:0">THN00005-...</div>
<div class="rc" style="font-size:13.800px;left:1598px;top:439px;width:154px">Công ty CP Hương việt</div>
<div class="rc r" style="padding-right:2px;left:1753px;top:439px;width:74px">40,000</div>
<div class="rc" style="left:1404px;top:467px;width:90px">13/10/2023</div>
<div class="rc" style="font-size:14.200px;left:1495px;top:467px;width:102px">THN00004-1...</div>
<div class="rc" style="font-size:13.800px;left:1598px;top:467px;width:154px">Nguyễn Hoàng Thiện</div>
<div class="rc r" style="padding-right:2px;left:1753px;top:467px;width:74px">10,000</div>
<div class="rc" style="left:1404px;top:495px;width:90px">13/10/2023</div>
<div class="rc" style="font-size:14.200px;left:1495px;top:495px;width:102px">THN00003-1...</div>
<div class="rc" style="font-size:13.800px;left:1598px;top:495px;width:154px;letter-spacing:-.35px">NCC Thịnh Vượng</div>
<div class="rc r" style="padding-right:2px;left:1753px;top:495px;width:74px">10,000</div>
<div class="rc" style="left:1404px;top:523px;width:90px">13/10/2023</div>
<div class="rc" style="font-size:14.200px;left:1495px;top:523px;width:102px">THN00002-1...</div>
<div class="rc" style="font-size:13.800px;left:1598px;top:523px;width:154px">Công ty CP Hương việt</div>
<div class="rc r" style="padding-right:2px;left:1753px;top:523px;width:74px">20,000</div>
<div class="rc" style="left:1404px;top:551px;width:90px">17/07/2023</div>
<div class="rc" style="font-size:14.200px;left:1495px;top:551px;width:102px">THN00001-1...</div>
<div class="rc" style="font-size:13.800px;left:1598px;top:551px;width:154px">Nguyễn Hoàng Thiện</div>
<div class="rc r" style="padding-right:2px;left:1753px;top:551px;width:74px">720,000</div>
<svg class="a" style="left:1387px;top:448px" width="5" height="9" viewBox="0 0 5 9"><path d="M0.500 0.500 L4.500 4.500 L0.500 8.500 Z" fill="#000"/></svg>
<div class="hl" style="left:1382px;top:890px;width:522px"></div>
<div class="a hatch" style="left:1382px;top:891px;width:522px;height:33px"></div>
<div class="a b r red nw" style="left:1496px;top:893px;width:101px;height:29px;line-height:28px;border:1px dashed #c6c6c6;background:#fff;font-size:14px;padding-right:4px">Có 5 phiếu</div>
<div class="a b r red nw" style="left:1754px;top:893px;width:73px;height:29px;line-height:28px;border:1px dashed #c6c6c6;background:#fff;font-size:14px;padding-right:4px;letter-spacing:.3px">800,000</div>
<div class="a" style="left:1382px;top:924px;width:522px;height:17px;background:#fff"></div>
<div class="a hatch" style="left:1399px;top:924px;width:375px;height:16px;border:1px solid #acacac"></div>
<svg class="a" style="left:1387px;top:928px" width="5" height="9" viewBox="0 0 5 9"><path d="M4.500 0.500 L0.500 4.500 L4.500 8.500 Z" fill="#000"/></svg>
<svg class="a" style="left:1893px;top:928px" width="5" height="9" viewBox="0 0 5 9"><path d="M0.500 0.500 L4.500 4.500 L0.500 8.500 Z" fill="#000"/></svg>
<svg class="a" style="left:884px;top:612px" width="13" height="20" viewBox="0 0 13 20"><path d="M0.500 0.500 V16.500 L4.300 13 L7 19 L9.200 18 L6.500 12.200 H11.500 Z" fill="#fff" stroke="#000" stroke-width="1"/></svg>

</body>
</html>
